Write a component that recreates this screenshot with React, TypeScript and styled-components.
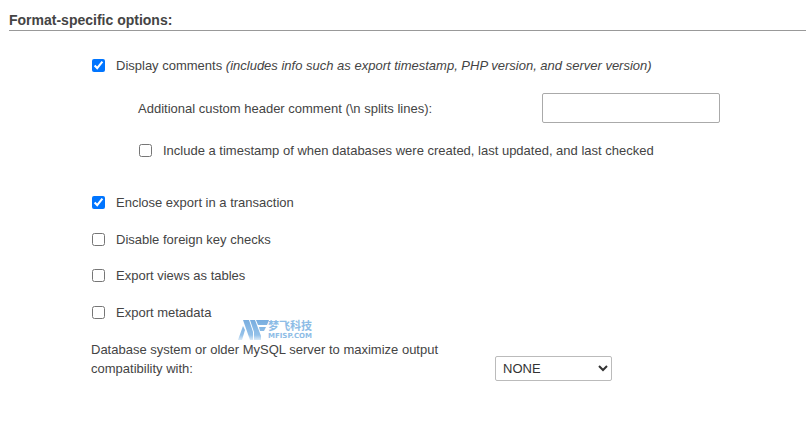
import React from "react";
import styled, { createGlobalStyle } from "styled-components";

const Global = createGlobalStyle`
  body { margin: 0; background: #fff; color: #444; font: 13px/19px "Liberation Sans", Arial, sans-serif; }
  * { box-sizing: border-box; }
`;
const Page = styled.main`padding-top: 10px;`;
const Title = styled.h2`
  margin: 0 0 0 9px; height: 21px; border-bottom: 1px solid #999;
  font-size: 14px; line-height: 20px; font-weight: bold;
`;
const Options = styled.ul`list-style: none; margin: 0; padding: 25px 86px 0 91px;`;
const Option = styled.li<{ $gap?: number }>`position: relative; margin-bottom: ${(p) => p.$gap ?? 18}px;`;
const SubList = styled.ul`list-style: none; margin: 0; padding: 18px 0 0 47px;`;
const CheckLabel = styled.label`display: flex; align-items: center; gap: 11px;`;
const Box = styled.input`width: 13px; height: 13px; margin: 0 0 0 1px; flex: none;`;
const FieldRow = styled.div`display: flex; justify-content: space-between; align-items: center; margin-bottom: 18px;`;
const TextField = styled.input`
  width: 178px; height: 30px; border: 1px solid #aaa; border-radius: 2px; background: #fff; padding: 4px; font: inherit;
`;
const SelectRow = styled.div`display: flex; align-items: flex-start; gap: 44px;`;
const SelectLabel = styled.label`width: 360px;`;
const Select = styled.select`
  width: 117px; height: 25px; margin-top: 16px; border: 1px solid #bbb; border-radius: 2px;
  background: #fff; color: #333; font: inherit; padding: 0 3px;
`;
const Watermark = styled.svg`position: absolute; left: 147px; top: 15px; pointer-events: none;`;

function Logo() {
  return (
    <Watermark width="78" height="25" viewBox="0 0 78 25" role="img" aria-label="梦飞科技 MFISP.COM">
      <defs>
        <linearGradient id="blue" gradientUnits="userSpaceOnUse" x1="0" y1="2" x2="0" y2="22">
          <stop offset="0" stopColor="#78addf" />
          <stop offset="0.75" stopColor="#94c1e9" />
          <stop offset="1" stopColor="#dcebf8" />
        </linearGradient>
      </defs>
      <path fill="url(#blue)" d="M0 22L5 8L7 12L4 22Z" />
      <path fill="url(#blue)" d="M5 2H11L15 14V22H12Z" />
      <path fill="url(#blue)" d="M12 2H17L23 18V22H16V14Z" />
      <path fill="url(#blue)" d="M18 2H31L29 7H20ZM21 9H28L26 13H22Z" />
      <text x="30" y="12" fontFamily="Noto Sans CJK SC, sans-serif" fontSize="11" fontWeight="700" fill="#8dbce6">梦飞科技</text>
      <text x="30" y="20" fontFamily="DejaVu Sans, sans-serif" fontSize="7" fontWeight="700" fill="#8dbce6">MFISP.COM</text>
    </Watermark>
  );
}

export default function App() {
  return (
    <Page>
      <Global />
      <Title>Format-specific options:</Title>
      <Options>
        <Option $gap={33}>
          <CheckLabel><Box type="checkbox" defaultChecked /><span>Display comments <em>(includes info such as export timestamp, PHP version, and server version)</em></span></CheckLabel>
          <SubList>
            <li><FieldRow><label htmlFor="header">Additional custom header comment (\n splits lines):</label><TextField id="header" /></FieldRow></li>
            <li><CheckLabel><Box type="checkbox" />Include a timestamp of when databases were created, last updated, and last checked</CheckLabel></li>
          </SubList>
        </Option>
        <Option><CheckLabel><Box type="checkbox" defaultChecked />Enclose export in a transaction</CheckLabel></Option>
        <Option $gap={17}><CheckLabel><Box type="checkbox" />Disable foreign key checks</CheckLabel></Option>
        <Option><CheckLabel><Box type="checkbox" />Export views as tables</CheckLabel></Option>
        <Option><CheckLabel><Box type="checkbox" />Export metadata</CheckLabel><Logo /></Option>
        <li><SelectRow><SelectLabel htmlFor="compat">Database system or older MySQL server to maximize output compatibility with:</SelectLabel><Select id="compat"><option>NONE</option></Select></SelectRow></li>
      </Options>
    </Page>
  );
}
